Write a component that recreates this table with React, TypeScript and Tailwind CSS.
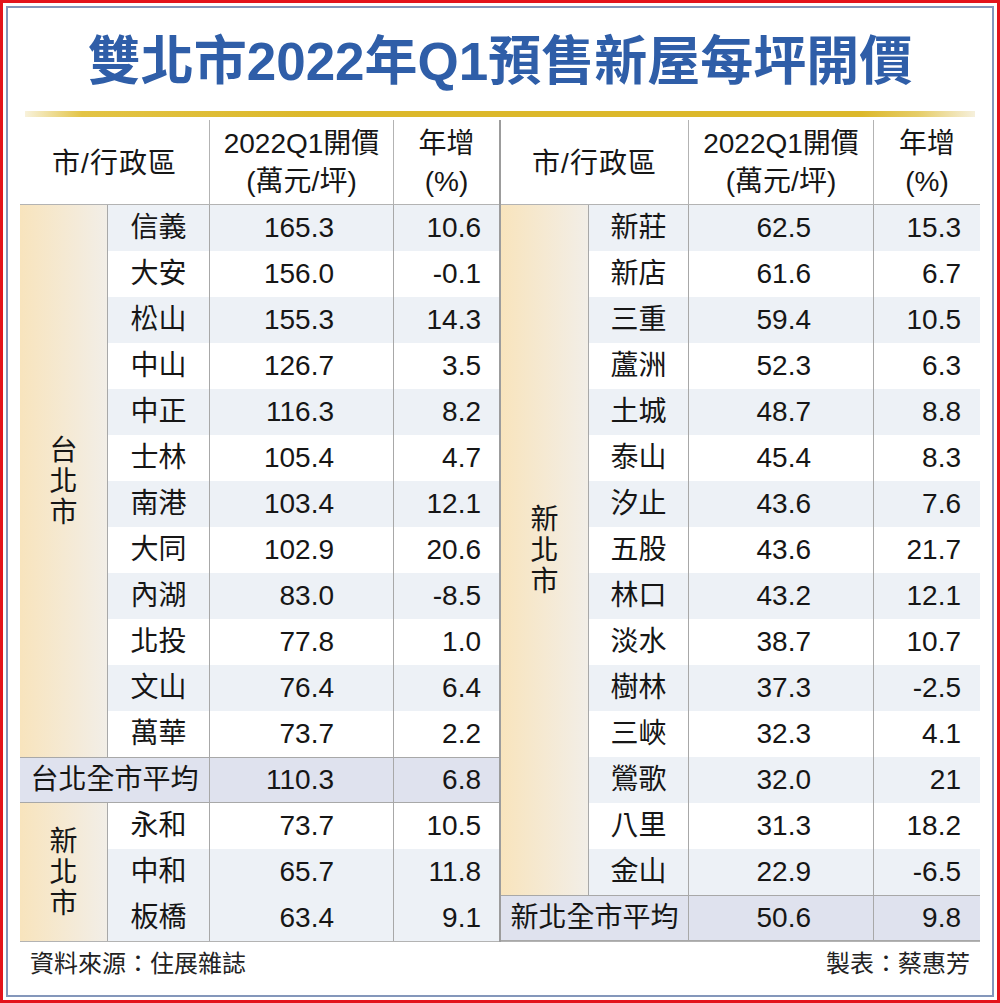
import React from "react";

type Row = [string, string, string, boolean];

const FONT = "font-['Liberation_Sans','Noto_Sans_CJK_TC',sans-serif]";

const taipei: Row[] = [
  ["信義", "165.3", "10.6", true],
  ["大安", "156.0", "-0.1", false],
  ["松山", "155.3", "14.3", true],
  ["中山", "126.7", "3.5", false],
  ["中正", "116.3", "8.2", true],
  ["士林", "105.4", "4.7", false],
  ["南港", "103.4", "12.1", true],
  ["大同", "102.9", "20.6", false],
  ["內湖", "83.0", "-8.5", true],
  ["北投", "77.8", "1.0", false],
  ["文山", "76.4", "6.4", true],
  ["萬華", "73.7", "2.2", false],
];

const ntLeft: Row[] = [
  ["永和", "73.7", "10.5", false],
  ["中和", "65.7", "11.8", true],
  ["板橋", "63.4", "9.1", true],
];

const ntRight: Row[] = [
  ["新莊", "62.5", "15.3", true],
  ["新店", "61.6", "6.7", false],
  ["三重", "59.4", "10.5", true],
  ["蘆洲", "52.3", "6.3", false],
  ["土城", "48.7", "8.8", true],
  ["泰山", "45.4", "8.3", false],
  ["汐止", "43.6", "7.6", true],
  ["五股", "43.6", "21.7", false],
  ["林口", "43.2", "12.1", true],
  ["淡水", "38.7", "10.7", false],
  ["樹林", "37.3", "-2.5", true],
  ["三峽", "32.3", "4.1", false],
  ["鶯歌", "32.0", "21", true],
  ["八里", "31.3", "18.2", false],
  ["金山", "22.9", "-6.5", true],
];

function Header() {
  return (
    <>
      <div className="col-span-2 flex items-center justify-center border-b border-[#b3b3b3] pt-[4px]">
        <span className="tracking-[1px]">市/行政區</span>
      </div>
      <div className="flex flex-col items-center justify-center border-b border-l border-[#b3b3b3] leading-[38px] pt-[2px]">
        <span>2022Q1開價</span>
        <span>(萬元/坪)</span>
      </div>
      <div className="flex flex-col items-center justify-center border-b border-l border-[#b3b3b3] leading-[38px] pt-[2px]">
        <span>年增</span>
        <span>(%)</span>
      </div>
    </>
  );
}

function CityCell({ name, span }: { name: string; span: "12" | "3" | "15" }) {
  const spanClass =
    span === "12" ? "row-span-12" : span === "3" ? "row-span-3" : "row-span-15";
  return (
    <div
      className={`${spanClass} flex flex-col items-center justify-center bg-[linear-gradient(to_right,#f8e4bd,#f2eee7)] leading-[31px]`}
    >
      {name.split("").map((c) => (
        <span key={c}>{c}</span>
      ))}
    </div>
  );
}

function DataRow({ row, pricePr }: { row: Row; pricePr: "left" | "right" }) {
  const [name, price, yoy, shaded] = row;
  const bg = shaded ? "bg-[#edf1f6]" : "bg-white";
  const pr = pricePr === "left" ? "pr-[59px]" : "pr-[62px]";
  const yr = pricePr === "left" ? "pr-[18px]" : "pr-[19px]";
  return (
    <>
      <div className={`${bg} flex items-center justify-center border-l border-[#a8a8a8]`}>{name}</div>
      <div className={`${bg} flex items-center justify-end border-l border-[#a8a8a8] ${pr}`}>{price}</div>
      <div className={`${bg} flex items-center justify-end border-l border-[#a8a8a8] ${yr}`}>{yoy}</div>
    </>
  );
}

function AvgRow({ name, price, yoy, side }: { name: string; price: string; yoy: string; side: "left" | "right" }) {
  const pr = side === "left" ? "pr-[59px]" : "pr-[62px]";
  const yr = side === "left" ? "pr-[18px]" : "pr-[19px]";
  return (
    <>
      <div className="col-span-2 flex items-center justify-center border-y border-[#a8a8a8] bg-[#dfe2ee]">{name}</div>
      <div className={`flex items-center justify-end border-y border-l border-[#a8a8a8] bg-[#dfe2ee] ${pr}`}>{price}</div>
      <div className={`flex items-center justify-end border-y border-l border-[#a8a8a8] bg-[#dfe2ee] ${yr}`}>{yoy}</div>
    </>
  );
}

export default function App() {
  return (
    <div className={`w-[1000px] h-[1003px] border-[3px] border-[#e3141c] bg-white p-[3px] ${FONT}`}>
      <div className="flex h-full flex-col border-2 border-[#8497bb] bg-white">
        {/* Title */}
        <div className="flex h-[103px] items-center justify-center pt-[4px]">
          <h1 className="text-[53px] font-bold leading-none text-[#2f5ea8]">
            雙北市2022年Q1預售新屋每坪開價
          </h1>
        </div>
        {/* Gold line */}
        <div className="mx-[17px] h-[6px] bg-[linear-gradient(to_right,#f8f2dc_0%,#e3c445_6%,#dcb82a_30%,#dcb82a_88%,#e6cd68_94%,#f6f0dc_100%)]" />
        {/* Table */}
        <div className="mx-[12px] mt-[3px] flex text-[28px] text-[#161616]">
          <div className="grid w-[479px] grid-cols-[87px_102px_184px_106px] grid-rows-[85px_repeat(16,46px)] border-b border-[#b3b3b3]">
            <Header />
            <CityCell name="台北市" span="12" />
            {taipei.map((r) => (
              <DataRow key={r[0]} row={r} pricePr="left" />
            ))}
            <AvgRow name="台北全市平均" price="110.3" yoy="6.8" side="left" />
            <CityCell name="新北市" span="3" />
            {ntLeft.map((r) => (
              <DataRow key={r[0]} row={r} pricePr="left" />
            ))}
          </div>
          <div className="w-[2px] bg-[#9c9c9c]" />
          <div className="grid w-[479px] grid-cols-[87px_100px_185px_107px] grid-rows-[85px_repeat(16,46px)] border-b border-[#b3b3b3]">
            <Header />
            <CityCell name="新北市" span="15" />
            {ntRight.map((r) => (
              <DataRow key={r[0]} row={r} pricePr="right" />
            ))}
            <AvgRow name="新北全市平均" price="50.6" yoy="9.8" side="right" />
          </div>
        </div>
        {/* Footer */}
        <div className="flex h-[44px] items-center justify-between px-[22px] text-[24px] text-[#222]">
          <span>資料來源：住展雜誌</span>
          <span>製表：蔡惠芳</span>
        </div>
      </div>
    </div>
  );
}
